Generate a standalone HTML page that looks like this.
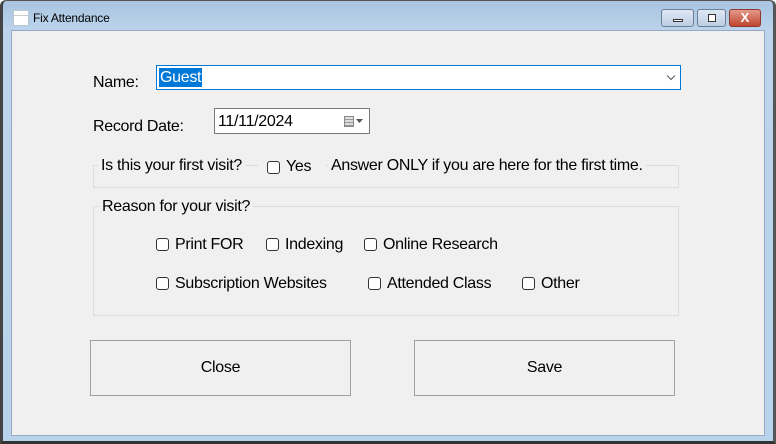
<!DOCTYPE html>
<html><head><meta charset="utf-8"><style>
*{margin:0;padding:0;box-sizing:border-box}
body{width:776px;height:444px;overflow:hidden;background:#fff;font-family:"Liberation Sans",Arial,sans-serif;position:relative}
.win{position:absolute;left:0;top:0;width:776px;height:444px;background:linear-gradient(#a9c4e0,#bcd4ec 30px,#b9d3ec);border:1px solid #555;border-radius:6px 6px 0 0;border-left:3px solid #444;border-bottom:3px solid #333;border-right:3px solid #555}
.client{position:absolute;left:11px;top:30px;width:754px;height:406px;background:#f0f0f0;border:1px solid #95a9c0}
.a{position:absolute}
.t{font-size:16px;color:#000;white-space:nowrap;letter-spacing:-0.3px}
.cb{position:absolute;width:13px;height:13px;border:1px solid #333;border-radius:3px;background:#fff}
.gb{position:absolute;border:1px solid #dcdcdc}
.lg{position:absolute;background:#f0f0f0;padding:0 3px}
.btn{position:absolute;border:1px solid #a0a0a0;background:#f0f0f0;font-size:16px;letter-spacing:-0.3px;display:flex;align-items:center;justify-content:center}
.tb{position:absolute;top:9px;height:18px;border:1px solid #6d7f96;border-radius:3px;background:linear-gradient(#dfe9f5,#bccde2)}
</style></head><body>
<div class="win"></div>
<div class="a" style="left:13px;top:10px;width:16px;height:16px;background:#fff;border:1px solid #b9c6d4"><div style="margin-top:4px;border-top:1px solid #ccc"></div></div>
<div class="a" style="left:33px;top:11px;font-size:12px;color:#000;letter-spacing:-0.2px">Fix Attendance</div>
<div class="tb" style="left:661px;width:33px"><div class="a" style="left:11px;top:9px;width:10px;height:3px;border:1px solid #333;background:#fff"></div></div>
<div class="tb" style="left:697px;width:29px"><div class="a" style="left:10px;top:4px;width:8px;height:8px;border:1px solid #333;background:#fff"></div></div>
<div class="tb" style="left:729px;width:32px;background:linear-gradient(#e49a8c,#c0452f);border-color:#8b3a2c;color:#fff;font-weight:bold;font-size:13px;text-align:center;line-height:16px">X</div>
<div class="client"></div>
<div class="a t" style="left:93px;top:74px">Name:</div>
<div class="a" style="left:156px;top:65px;width:525px;height:25px;background:#fff;border:1px solid #0078d7">
 <div class="a t" style="left:2px;top:2px;background:#0078d7;color:#fff;padding:0 1px;height:19px;line-height:19px">Guest</div>
 <svg class="a" style="right:4px;top:8px" width="10" height="7"><path d="M1 1.5L5 5.5L9 1.5" stroke="#555" fill="none"/></svg>
</div>
<div class="a t" style="left:93px;top:118px">Record Date:</div>
<div class="a" style="left:214px;top:108px;width:156px;height:26px;background:#fff;border:1px solid #7a7a7a">
 <div class="a t" style="left:3px;top:4px">11/11/2024</div>
 <div class="a" style="left:129px;top:7px;width:10px;height:11px;border:1px solid #888;background:repeating-linear-gradient(#ddd 0 2px,#999 2px 3px)"></div>
 <svg class="a" style="left:141px;top:10px" width="7" height="4"><path d="M0 0H7L3.5 4Z" fill="#555"/></svg>
</div>
<div class="gb" style="left:93px;top:165px;width:586px;height:23px"></div>
<div class="lg t" style="left:98px;top:157px">Is this your first visit?</div>
<div class="lg" style="left:258px;top:157px;width:68px;height:20px"></div>
<div class="cb" style="left:267px;top:161px"></div>
<div class="a t" style="left:286px;top:158px">Yes</div>
<div class="lg t" style="left:328px;top:157px">Answer ONLY if you are here for the first time.</div>
<div class="gb" style="left:93px;top:206px;width:586px;height:110px"></div>
<div class="lg t" style="left:99px;top:198px">Reason for your visit?</div>
<div class="cb" style="left:156px;top:238px"></div><div class="a t" style="left:175px;top:236px">Print FOR</div>
<div class="cb" style="left:266px;top:238px"></div><div class="a t" style="left:285px;top:236px">Indexing</div>
<div class="cb" style="left:364px;top:238px"></div><div class="a t" style="left:383px;top:236px">Online Research</div>
<div class="cb" style="left:156px;top:277px"></div><div class="a t" style="left:175px;top:275px">Subscription Websites</div>
<div class="cb" style="left:368px;top:277px"></div><div class="a t" style="left:387px;top:275px">Attended Class</div>
<div class="cb" style="left:522px;top:277px"></div><div class="a t" style="left:541px;top:275px">Other</div>
<div class="btn" style="left:90px;top:340px;width:261px;height:56px">Close</div>
<div class="btn" style="left:414px;top:340px;width:261px;height:56px">Save</div>
</body></html>
